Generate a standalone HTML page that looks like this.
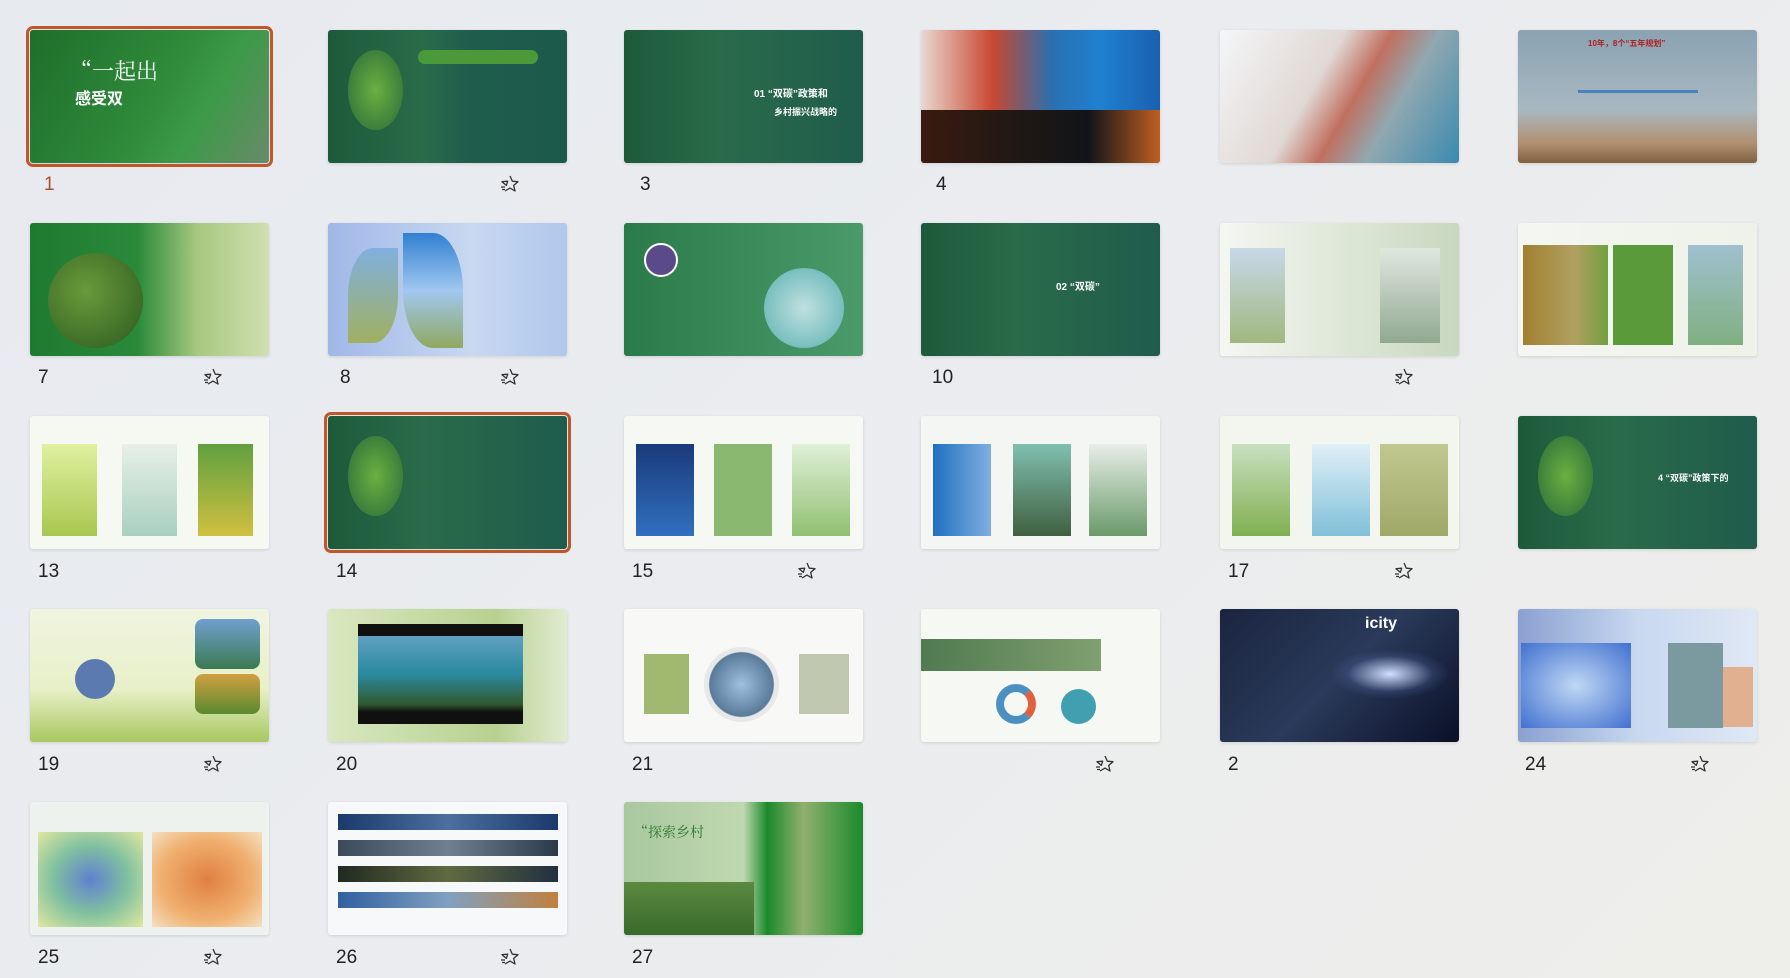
<!DOCTYPE html>
<html><head><meta charset="utf-8"><style>
body{margin:0;width:1790px;height:978px;overflow:hidden;background:linear-gradient(135deg,#e7eaef 0%,#eaecef 50%,#eeeeea 100%);font-family:"Liberation Sans","Noto Sans CJK SC",sans-serif;position:relative}
.s{position:absolute;width:239px;height:133px;border-radius:3px;overflow:hidden;box-shadow:0 1px 3px rgba(0,0,0,.12)}
.n{position:absolute;font-size:19px;color:#222;line-height:20px}
.st{position:absolute;width:20px;height:20px}
.sel{outline:3px solid #c0572b;outline-offset:1px}
</style></head><body>
<!-- row 1 -->
<div class="s sel" style="left:30px;top:30px;background:linear-gradient(120deg,#1e6e2a,#2f8a3a 50%,#3c9a48 70%,#6a8a6a)"><div style="position:absolute;left:40px;top:25px;color:#fff;font-size:22px;font-family:'Noto Serif CJK SC',serif">“一起出</div><div style="position:absolute;left:45px;top:55px;color:#fff;font-size:16px;font-weight:bold">感受双</div></div>
<div class="s" style="left:328px;top:30px;background:linear-gradient(90deg,#1c5a3a 0%,#2a6b4a 40%,#1f5c4c 60%,#1c5a4c)"><div style="position:absolute;left:90px;top:20px;width:120px;height:14px;background:#4a9a3a;border-radius:7px"></div><div style="position:absolute;left:20px;top:20px;width:55px;height:80px;border-radius:50%;background:radial-gradient(#6ab040,#2a6a3a)"></div></div>
<div class="s" style="left:624px;top:30px;background:linear-gradient(90deg,#1c5a3a,#2a6b4a 40%,#1f5c4c)"><div style="position:absolute;left:130px;top:55px;color:#fff;font-size:10px;font-weight:bold">01 “双碳”政策和</div><div style="position:absolute;left:150px;top:75px;color:#fff;font-size:9px;font-weight:bold">乡村振兴战略的</div></div>
<div class="s" style="left:921px;top:30px;background:linear-gradient(90deg,#e8d8d0 0%,#c84830 30%,#2a70b0 55%,#2080d0 75%,#1a60b0);"><div style="position:absolute;left:0;top:80px;width:100%;height:53px;background:linear-gradient(90deg,#3a1a10,#201814 40%,#101418 70%,#c06020)"></div></div>
<div class="s" style="left:1220px;top:30px;background:linear-gradient(120deg,#f4f6f8,#e0d8d4 40%,#c07060 55%,#90a8b0 70%,#3a8ab0)"></div>
<div class="s" style="left:1518px;top:30px;background:linear-gradient(180deg,#8aa2b2 0%,#a8b8c0 60%,#b09070 85%,#806040)"><div style="position:absolute;left:70px;top:8px;color:#b02020;font-size:8px;font-weight:bold">10年，8个“五年规划”</div><div style="position:absolute;left:60px;top:60px;width:120px;height:3px;background:#4a80c0"></div></div>
<!-- row 2 -->
<div class="s" style="left:30px;top:223px;background:linear-gradient(90deg,#1e7a30,#2a8a3a 45%,#a8c880 70%,#d0e0b0)"><div style="position:absolute;left:18px;top:30px;width:95px;height:95px;border-radius:50%;background:radial-gradient(circle at 40% 40%,#6a9a3a,#2a5a20)"></div></div>
<div class="s" style="left:328px;top:223px;background:linear-gradient(90deg,#a0b8e8,#c8d8f0 60%,#b0c8ec)"><div style="position:absolute;left:20px;top:25px;width:50px;height:95px;border-radius:50% 0;background:linear-gradient(#80b0e0,#a0b060)"></div><div style="position:absolute;left:75px;top:10px;width:60px;height:115px;border-radius:0 50%;background:linear-gradient(#3080d0,#a0c8f0 50%,#90a860)"></div></div>
<div class="s" style="left:624px;top:223px;background:linear-gradient(90deg,#2a7a4a,#3a8a5a 50%,#4a9a6a)"><div style="position:absolute;left:20px;top:20px;width:30px;height:30px;border-radius:50%;background:#5a4a8a;border:2px solid #fff"></div><div style="position:absolute;left:140px;top:45px;width:80px;height:80px;border-radius:50%;background:radial-gradient(#c0e0e0,#5ab0b0)"></div></div>
<div class="s" style="left:921px;top:223px;background:linear-gradient(90deg,#1c5a3a,#2a6b4a 40%,#1f5c4c)"><div style="position:absolute;left:135px;top:55px;color:#fff;font-size:10px;font-weight:bold">02 “双碳”</div></div>
<div class="s" style="left:1220px;top:223px;background:linear-gradient(90deg,#f4f6f2,#dfe8d8 50%,#c8d8c0)"><div style="position:absolute;left:10px;top:25px;width:55px;height:95px;background:linear-gradient(#c8d8e8,#a0b880)"></div><div style="position:absolute;left:160px;top:25px;width:60px;height:95px;background:linear-gradient(#e0e8e0,#90a890)"></div></div>
<div class="s" style="left:1518px;top:223px;background:linear-gradient(90deg,#f4f6f2,#eef2e8)"><div style="position:absolute;left:5px;top:22px;width:85px;height:100px;background:linear-gradient(90deg,#a08030,#b0a060 60%,#70a040)"></div><div style="position:absolute;left:95px;top:22px;width:60px;height:100px;background:#5a9a3a"></div><div style="position:absolute;left:170px;top:22px;width:55px;height:100px;background:linear-gradient(#a0c0d0,#80b080)"></div></div>
<!-- row 3 -->
<div class="s" style="left:30px;top:416px;background:#f6f8f2"><div style="position:absolute;left:12px;top:28px;width:55px;height:92px;background:linear-gradient(#e0f0a0,#a8c850)"></div><div style="position:absolute;left:92px;top:28px;width:55px;height:92px;background:linear-gradient(#e8f0e8,#a8d0c0)"></div><div style="position:absolute;left:168px;top:28px;width:55px;height:92px;background:linear-gradient(#60a040,#d0c040)"></div></div>
<div class="s sel" style="left:328px;top:416px;background:linear-gradient(90deg,#1c5a3a,#2a6b4a 40%,#1f5c4c)"><div style="position:absolute;left:20px;top:20px;width:55px;height:80px;border-radius:50%;background:radial-gradient(#6ab040,#2a6a3a)"></div></div>
<div class="s" style="left:624px;top:416px;background:#f6f8f4"><div style="position:absolute;left:12px;top:28px;width:58px;height:92px;background:linear-gradient(#1a3a7a,#3070c0)"></div><div style="position:absolute;left:90px;top:28px;width:58px;height:92px;background:#8ab870"></div><div style="position:absolute;left:168px;top:28px;width:58px;height:92px;background:linear-gradient(#e0f0d8,#90c070)"></div></div>
<div class="s" style="left:921px;top:416px;background:#f4f6f4"><div style="position:absolute;left:12px;top:28px;width:58px;height:92px;background:linear-gradient(90deg,#2070c0,#80b0e0)"></div><div style="position:absolute;left:92px;top:28px;width:58px;height:92px;background:linear-gradient(#80c0b0,#406040)"></div><div style="position:absolute;left:168px;top:28px;width:58px;height:92px;background:linear-gradient(#e8eee8,#6a9a6a)"></div></div>
<div class="s" style="left:1220px;top:416px;background:#f2f6ee"><div style="position:absolute;left:12px;top:28px;width:58px;height:92px;background:linear-gradient(#c8e0c0,#80b050)"></div><div style="position:absolute;left:92px;top:28px;width:58px;height:92px;background:linear-gradient(#e0f0f8,#80c0d8)"></div><div style="position:absolute;left:160px;top:28px;width:68px;height:92px;background:linear-gradient(#c0c890,#a0a868)"></div></div>
<div class="s" style="left:1518px;top:416px;background:linear-gradient(90deg,#1c5a3a,#2a6b4a 40%,#1f5c4c)"><div style="position:absolute;left:20px;top:20px;width:55px;height:80px;border-radius:50%;background:radial-gradient(#6ab040,#2a6a3a)"></div><div style="position:absolute;left:140px;top:55px;color:#fff;font-size:9px;font-weight:bold">4 “双碳”政策下的</div></div>
<!-- row 4 -->
<div class="s" style="left:30px;top:609px;background:linear-gradient(180deg,#f0f4e0,#e8f0c8 60%,#a8c860)"><div style="position:absolute;left:165px;top:10px;width:65px;height:50px;border-radius:8px;background:linear-gradient(#70a0d0,#3a7a50)"></div><div style="position:absolute;left:165px;top:65px;width:65px;height:40px;border-radius:8px;background:linear-gradient(#d0a040,#5a8a30)"></div><div style="position:absolute;left:45px;top:50px;width:40px;height:40px;border-radius:50%;background:#5a7ab0"></div></div>
<div class="s" style="left:328px;top:609px;background:linear-gradient(90deg,#d8e8c0,#b8d090 70%,#e0ecd0)"><div style="position:absolute;left:30px;top:15px;width:165px;height:100px;background:linear-gradient(#101010 0,#101010 12%,#60a0c0 12%,#2a8aa0 50%,#305a30 80%,#101010 88%)"></div></div>
<div class="s" style="left:624px;top:609px;background:#f8f8f6"><div style="position:absolute;left:80px;top:38px;width:75px;height:75px;border-radius:50%;background:radial-gradient(#a0c0e0,#5a7a9a 60%,#e8e8e8 62%)"></div><div style="position:absolute;left:20px;top:45px;width:45px;height:60px;background:#a0b870"></div><div style="position:absolute;left:175px;top:45px;width:50px;height:60px;background:#c0c8b0"></div></div>
<div class="s" style="left:921px;top:609px;background:#f6f8f4"><div style="position:absolute;left:0;top:30px;width:180px;height:32px;background:linear-gradient(90deg,#507a50,#80a070)"></div><div style="position:absolute;left:75px;top:75px;width:40px;height:40px;border-radius:50%;border:8px solid #4a90c0;border-right-color:#e06040;box-sizing:border-box"></div><div style="position:absolute;left:140px;top:80px;width:35px;height:35px;border-radius:50%;background:#40a0b0"></div></div>
<div class="s" style="left:1220px;top:609px;background:linear-gradient(135deg,#1a2440,#2a3a5a 50%,#0a1028)"><div style="position:absolute;left:145px;top:6px;color:#fff;font-size:16px;font-weight:bold">icity</div><div style="position:absolute;left:110px;top:40px;width:120px;height:50px;background:radial-gradient(ellipse,#d0e0ff,rgba(80,100,160,.3) 50%,transparent 70%)"></div></div>
<div class="s" style="left:1518px;top:609px;background:linear-gradient(90deg,#8aa0d0,#c8d8f0 50%,#e0e8f4)"><div style="position:absolute;left:3px;top:34px;width:110px;height:85px;background:radial-gradient(#c0d8f4,#4070d0)"></div><div style="position:absolute;left:150px;top:34px;width:55px;height:85px;background:#7a9aa0"></div><div style="position:absolute;left:205px;top:58px;width:30px;height:60px;background:#e0b090"></div></div>
<!-- row 5 -->
<div class="s" style="left:30px;top:802px;background:#eef2ee"><div style="position:absolute;left:8px;top:30px;width:105px;height:95px;background:radial-gradient(#6080d0,#80c0a0 50%,#e0e8a0)"></div><div style="position:absolute;left:122px;top:30px;width:110px;height:95px;background:radial-gradient(#e08040,#f0b070 60%,#f4e0c0)"></div></div>
<div class="s" style="left:328px;top:802px;background:#f6f8fa"><div style="position:absolute;left:10px;top:12px;width:220px;height:16px;background:linear-gradient(90deg,#1a3a6a,#4a70a0,#1a3a6a)"></div><div style="position:absolute;left:10px;top:38px;width:220px;height:16px;background:linear-gradient(90deg,#3a4a5a,#708090,#2a3a4a)"></div><div style="position:absolute;left:10px;top:64px;width:220px;height:16px;background:linear-gradient(90deg,#202a20,#606a40,#203040)"></div><div style="position:absolute;left:10px;top:90px;width:220px;height:16px;background:linear-gradient(90deg,#3060a0,#80a0c0,#c08040)"></div></div>
<div class="s" style="left:624px;top:802px;background:linear-gradient(90deg,#a8c8a0,#c0d8b0 50%,#1a8a2a 60%,#90b070 75%,#1a8a2a)"><div style="position:absolute;left:10px;top:20px;color:#2a7a2a;font-size:14px;font-family:'Noto Serif CJK SC',serif">“探索乡村</div><div style="position:absolute;left:0;top:80px;width:130px;height:53px;background:linear-gradient(#5a8a40,#3a6a2a)"></div></div>
<!-- labels -->
<div class="n" style="left:44px;top:175px;color:#b0502a">1</div>
<div class="n" style="left:640px;top:175px">3</div>
<div class="n" style="left:936px;top:175px">4</div>
<div class="n" style="left:38px;top:368px">7</div>
<div class="n" style="left:340px;top:368px">8</div>
<div class="n" style="left:932px;top:368px">10</div>
<div class="n" style="left:38px;top:562px">13</div>
<div class="n" style="left:336px;top:562px">14</div>
<div class="n" style="left:632px;top:562px">15</div>
<div class="n" style="left:1228px;top:562px">17</div>
<div class="n" style="left:38px;top:755px">19</div>
<div class="n" style="left:336px;top:755px">20</div>
<div class="n" style="left:632px;top:755px">21</div>
<div class="n" style="left:1228px;top:755px">2</div>
<div class="n" style="left:1525px;top:755px">24</div>
<div class="n" style="left:38px;top:948px">25</div>
<div class="n" style="left:336px;top:948px">26</div>
<div class="n" style="left:632px;top:948px">27</div>
<!-- stars -->
<svg width="0" height="0" style="position:absolute"><defs><symbol id="star" viewBox="0 0 20 20"><path d="M10 2 L12.3 7.2 L18 7.7 L13.7 11.4 L15 17 L10 14.1 L5 17 M6.3 11.4 L2 7.7 L7.7 7.2 Z" fill="none" stroke="#333" stroke-width="1.3" stroke-linejoin="round"/><path d="M1 13h4M2 15.5h3" stroke="#333" stroke-width="1.2"/></symbol></defs></svg>
<svg class="st" style="left:500px;top:174px"><use href="#star"/></svg>
<svg class="st" style="left:203px;top:367px"><use href="#star"/></svg>
<svg class="st" style="left:500px;top:367px"><use href="#star"/></svg>
<svg class="st" style="left:1394px;top:367px"><use href="#star"/></svg>
<svg class="st" style="left:797px;top:561px"><use href="#star"/></svg>
<svg class="st" style="left:1394px;top:561px"><use href="#star"/></svg>
<svg class="st" style="left:203px;top:754px"><use href="#star"/></svg>
<svg class="st" style="left:1095px;top:754px"><use href="#star"/></svg>
<svg class="st" style="left:1690px;top:754px"><use href="#star"/></svg>
<svg class="st" style="left:203px;top:947px"><use href="#star"/></svg>
<svg class="st" style="left:500px;top:947px"><use href="#star"/></svg>
</body></html>
